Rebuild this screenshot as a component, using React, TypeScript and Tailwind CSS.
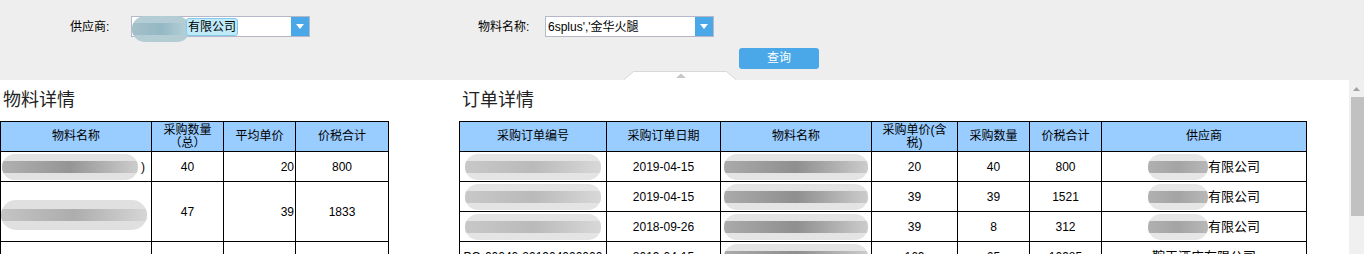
import React from 'react';

const font = { fontFamily: '"Liberation Sans", "Noto Sans CJK SC", sans-serif' };

function Blob({ className, bar }: { className: string; bar?: string }) {
  return (
    <div className={`shrink-0 rounded-full blur-[0.6px] flex items-center overflow-hidden ${className}`}>
      <div className={`w-full h-[12px] ${bar ?? 'bg-gradient-to-r from-[#b4b4b4] via-[#9c9c9c] to-[#d2d2d2]'}`} />
    </div>
  );
}

function Select({ width, children }: { width: string; children: React.ReactNode }) {
  return (
    <div className={`flex h-[21px] border border-[#b4b8c8] bg-white ${width}`}>
      <div className="flex-1 relative flex items-center pl-[2px] text-[12px] text-black whitespace-nowrap">{children}</div>
      <div className="w-[18px] bg-[#4aa8e8] flex items-center justify-center">
        <svg width="8" height="5" viewBox="0 0 8 5">
          <path d="M0 0 H8 L4 5 Z" fill="#ffffff" />
        </svg>
      </div>
    </div>
  );
}

const leftRows = [
  { h: 'h-[30px]', name: 'a', qty: '40', avg: '20', total: '800' },
  { h: 'h-[60px]', name: 'b', qty: '47', avg: '39', total: '1833' },
  { h: 'h-[30px]', name: '', qty: '', avg: '', total: '' },
];

const rightRows = [
  { no: true, date: '2019-04-15', price: '20', qty: '40', total: '800', sup: '有限公司' },
  { no: true, date: '2019-04-15', price: '39', qty: '39', total: '1521', sup: '有限公司' },
  { no: true, date: '2018-09-26', price: '39', qty: '8', total: '312', sup: '有限公司' },
  { no: false, date: '2019-04-15', price: '169', qty: '65', total: '10985', sup: '鞍王酒店有限公司' },
];

export default function App() {
  const cell = 'border-r border-b border-black flex items-center justify-center text-[12px] text-black whitespace-nowrap';
  const head = 'border-r border-b border-black flex items-center justify-center text-center text-[12px] leading-[13px] text-black bg-[#99ccff] h-[30px]';

  return (
    <div className="h-[254px] overflow-hidden flex flex-col bg-white" style={font}>
      {/* Filter bar */}
      <div className="h-[80px] bg-[#eeeeee] flex flex-col">
        <div className="flex items-center pt-[16px] pl-[70px]">
          <span className="w-[61px] text-[12px] text-black">供应商:</span>
          <Select width="w-[179px]">
            <Blob className="absolute left-[0px] top-[-1px] w-[58px] h-[26px] bg-[#b4ccd4]" bar="bg-gradient-to-r from-[#a4c0ca] via-[#94b8c4] to-[#b8d2da]" />
            <span className="ml-[52px] relative px-[1px] h-[18px] leading-[17px] bg-[#bfeaf8] border border-[#86c8ec] rounded-[3px]">有限公司</span>
          </Select>
          <span className="ml-[168px] w-[67px] text-[12px] text-black">物料名称:</span>
          <Select width="w-[169px]">
            <span>6splus','金华火腿</span>
          </Select>
        </div>
        <div className="flex pl-[739px] pt-[11px]">
          <button className="w-[80px] h-[21px] rounded-[3px] bg-[#4aa8e8] text-white text-[12px] leading-[21px]">查询</button>
        </div>
        <div className="pl-[623px] mt-[2px]">
          <svg width="114" height="9" viewBox="0 0 114 9">
            <path d="M0.5 9 L10.5 0.5 H103.5 L113.5 9" fill="#ffffff" stroke="#d8d8d8" />
            <path d="M53 7 L58 2.5 L63 7 Z" fill="#c8c8c8" />
          </svg>
        </div>
      </div>

      {/* Content */}
      <div className="flex-1 flex">
        <div className="flex-1 flex pt-[8px]">
          {/* Material detail */}
          <div className="w-[389px]">
            <div className="h-[24px] leading-[24px] pl-[3px] text-[18px] text-[#222]">物料详情</div>
            <div className="mt-[9px] grid grid-cols-[151px_72px_72px_93px] border-l border-t border-black">
              <div className={head}>物料名称</div>
              <div className={head}>采购数量<br />（总）</div>
              <div className={head}>平均单价</div>
              <div className={head}>价税合计</div>
              {leftRows.map((r, i) => (
                <React.Fragment key={i}>
                  <div className={`${cell} ${r.h} relative justify-start`}>
                    {r.name === 'a' && (
                      <>
                        <Blob className="w-[136px] h-[26px] ml-[1px] bg-[#e2e2e2]" bar="bg-gradient-to-r from-[#b0b0b0] via-[#959595] to-[#cdcdcd]" />
                        <span className="ml-[3px]">)</span>
                      </>
                    )}
                    {r.name === 'b' && (
                      <Blob className="w-[146px] h-[30px] mt-[6px] bg-[#e0e0e0]" bar="bg-gradient-to-r from-[#c4c4c4] via-[#adadad] to-[#d6d6d6]" />
                    )}
                  </div>
                  <div className={`${cell} ${r.h}`}>{r.qty}</div>
                  <div className={`${cell} ${r.h} justify-end pr-[1px]`}>{r.avg}</div>
                  <div className={`${cell} ${r.h}`}>{r.total}</div>
                </React.Fragment>
              ))}
            </div>
          </div>

          {/* Order detail */}
          <div className="ml-[70px] w-[848px]">
            <div className="h-[24px] leading-[24px] pl-[3px] text-[18px] text-[#222]">订单详情</div>
            <div className="mt-[9px] grid grid-cols-[147px_114px_151px_86px_72px_72px_205px] border-l border-t border-black">
              <div className={head}>采购订单编号</div>
              <div className={head}>采购订单日期</div>
              <div className={head}>物料名称</div>
              <div className={head}>采购单价(含<br />税)</div>
              <div className={head}>采购数量</div>
              <div className={head}>价税合计</div>
              <div className={head}>供应商</div>
              {rightRows.map((r, i) => (
                <React.Fragment key={i}>
                  <div className={`${cell} h-[30px] overflow-hidden`}>
                    {r.no ? (
                      <Blob className="w-[136px] h-[26px] bg-[#e4e4e4]" bar="bg-gradient-to-r from-[#c8c8c8] via-[#bababa] to-[#d8d8d8]" />
                    ) : (
                      <span>PO-00040-201904000000</span>
                    )}
                  </div>
                  <div className={`${cell} h-[30px]`}>{r.date}</div>
                  <div className={`${cell} h-[30px]`}>
                    <Blob className="w-[144px] h-[26px] bg-[#e4e4e4]" bar="bg-gradient-to-r from-[#aaaaaa] via-[#8f8f8f] to-[#cccccc]" />
                  </div>
                  <div className={`${cell} h-[30px]`}>{r.price}</div>
                  <div className={`${cell} h-[30px]`}>{r.qty}</div>
                  <div className={`${cell} h-[30px]`}>{r.total}</div>
                  <div className={`${cell} h-[30px]`}>
                    {r.no && (
                      <Blob className="w-[60px] h-[26px] bg-[#e6e6e6]" bar="bg-gradient-to-r from-[#b0b0b0] via-[#a4a4a4] to-[#b8b8b8]" />
                    )}
                    <span className="text-[13px]">{r.sup}</span>
                  </div>
                </React.Fragment>
              ))}
            </div>
          </div>
        </div>

        {/* Scrollbar */}
        <div className="w-[15px] bg-[#f0f0f0] flex flex-col items-end">
          <div className="w-[15px] h-[17px] flex items-center justify-center">
            <svg width="7" height="4" viewBox="0 0 7 4">
              <path d="M0 4 L3.5 0 L7 4 Z" fill="#a3a3a3" />
            </svg>
          </div>
          <div className="w-[13px] h-[119px] bg-[#c1c1c1]" />
        </div>
      </div>
    </div>
  );
}
